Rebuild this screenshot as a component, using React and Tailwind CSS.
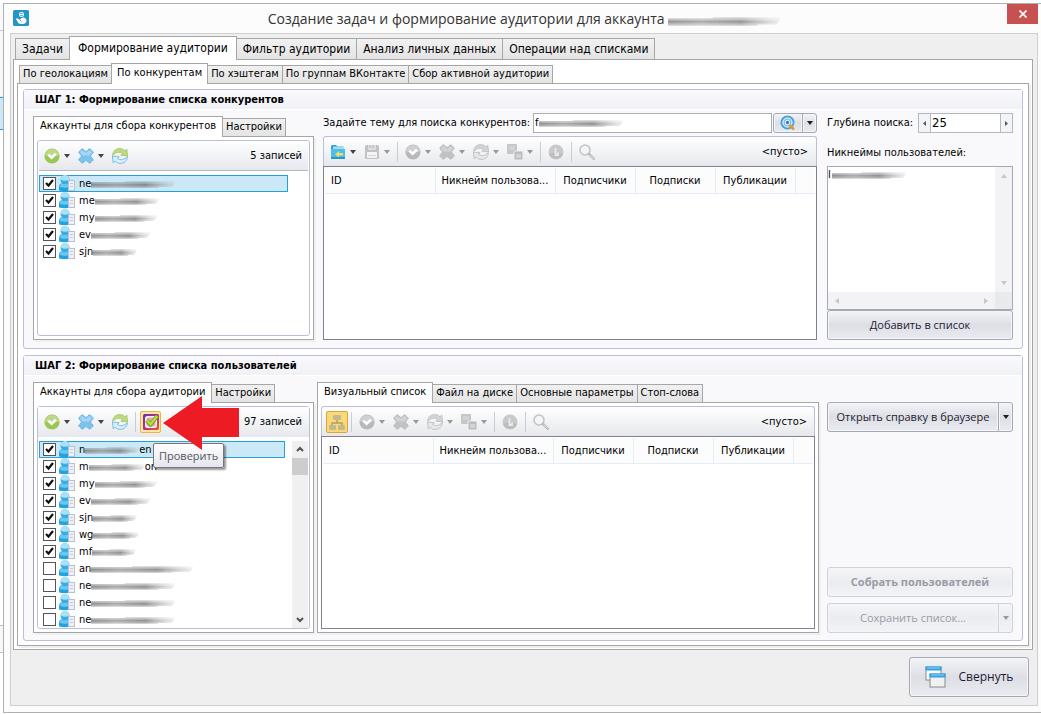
import React, { useId, useState } from 'react';
import clsx from 'clsx';

/* ---------- icons ---------- */

const Caret = ({ className = 'text-[#444]' }) => (
  <svg className={clsx('w-[6px] h-[4px] shrink-0', className)} viewBox="0 0 6 4" fill="currentColor">
    <path d="M0 0h6L3 4z" />
  </svg>
);

function CheckIcon({ off }) {
  return (
    <svg className="w-4 h-4" viewBox="0 0 16 16">
      <circle cx="8" cy="8" r="7.6" fill={off ? '#b9b9b9' : '#9cc653'} />
      <path d="M.6 7a7.6 7.6 0 0 1 14.8 0Q8 10 .6 7z" fill={off ? '#cfcfcf' : '#bcd98b'} />
      <path d="M4.400 6.600 7.600 9.800 11.800 5.800" fill="none" stroke="#fff" strokeWidth="2.600" />
    </svg>
  );
}

function CrossIcon({ off }) {
  return (
    <svg className="w-4 h-4" viewBox="0 0 16 16">
      <path
        d="M4.200.5 8 3.500 11.800.5 15.500 4.200 12.500 8l3 3.800-3.700 3.700L8 12.500l-3.800 3L.5 11.800 3.500 8 .5 4.200z"
        fill={off ? '#c2c2c2' : '#7cc3ec'}
        stroke={off ? '#b5b5b5' : '#5fabdf'}
        strokeWidth="1"
        strokeDasharray="1.500 1"
      />
      <path d="M4.200 2 8 5 11.800 2 14 4.200 11.500 7.500h-7L2 4.200z" fill={off ? '#d4d4d4' : '#a3d7f4'} />
    </svg>
  );
}

function RefreshIcon({ off }) {
  return (
    <svg className="w-4 h-4" viewBox="0 0 16 16">
      <path
        d="M.6 7.400C.8 3 4 .6 7.600.6c2.400 0 4 .8 5.200 2.200l2-1.600.8 6.800-6.800-.8 1.800-1.700C7.600 3.400 3.600 4 .6 7.400z"
        fill={off ? '#d4d4d4' : '#bedb80'}
        stroke={off ? '#b8b8b8' : '#98bf52'}
        strokeWidth=".7"
      />
      <path
        d="M15.400 8.600c-.2 4.400-3.400 6.800-7 6.800-2.400 0-4-.8-5.200-2.200l-2 1.600L.4 8l6.800.8-1.800 1.700c3 2.100 7 1.500 10-1.900z"
        fill={off ? '#e9e9e9' : '#d9effb'}
        stroke={off ? '#b8b8b8' : '#5fb2e0'}
        strokeWidth=".8"
      />
    </svg>
  );
}

const FolderIcon = () => (
  <svg className="w-4 h-4" viewBox="0 0 16 16">
    <path d="M1 2.500Q1 1 2.500 1H6l1.500 1.500H13V6H1z" fill="#2f9fd6" />
    <rect x="3" y="2.500" width="11" height="4" fill="#9fdcf6" />
    <path d="M1 5h14v9q0 1-1 1H2q-1 0-1-1z" fill="#52bdea" />
    <path d="M1 13h14v1q0 1-1 1H2q-1 0-1-1z" fill="#2b94cf" />
    <path d="M5 10.200 9 7v2h4v2.600H9v2z" fill="#e6e26a" />
  </svg>
);

const SaveIcon = () => (
  <svg className="w-4 h-4" viewBox="0 0 16 16">
    <rect x="1" y="1" width="14" height="14" rx="1.500" fill="#c2c2c2" />
    <rect x="4" y="1" width="8" height="5" fill="#dedede" />
    <path d="M6 1v3M9 1v3" stroke="#b0b0b0" />
    <rect x="3" y="8" width="10" height="6" fill="#f3f3f3" />
    <path d="M4 11.500h8" stroke="#d6d6d6" />
  </svg>
);

const CopyIcon = () => (
  <svg className="w-4 h-4" viewBox="0 0 16 16">
    <rect x="0" y="0" width="10" height="10" rx="1" fill="#c6c6c6" />
    <path d="M2 3h6M2 5h6" stroke="#e0e0e0" />
    <rect x="7" y="7" width="9" height="9" rx="1" fill="#bcbcbc" stroke="#eef0f3" />
    <rect x="9" y="10" width="5" height="4" fill="#d4d4d4" />
  </svg>
);

const InfoIcon = () => (
  <svg className="w-4 h-4" viewBox="0 0 16 16">
    <circle cx="8" cy="8" r="7.500" fill="#c9c9c9" />
    <path d="M1 10a7.500 7.500 0 0 0 14 0Q8 7 1 10z" fill="#bcbcbc" />
    <path d="M7.500 4v7.200h2.500V8.500" fill="none" stroke="#ececec" strokeWidth="1.800" />
  </svg>
);

const LensIcon = () => (
  <svg className="w-4 h-4" viewBox="0 0 16 16" fill="none">
    <circle cx="6" cy="6" r="5" fill="#f4f5f7" stroke="#c2c2c2" strokeWidth="1.500" />
    <path d="m10 10 4.700 4.700" stroke="#bdbdbd" strokeWidth="2.600" strokeLinecap="round" />
    <path d="m11 11 3.400 3.400" stroke="#e2e2e2" />
  </svg>
);

const TargetIcon = () => (
  <svg className="w-4 h-4" viewBox="0 0 16 16" fill="none">
    <circle cx="7.500" cy="7.500" r="7" fill="#4a9fd8" />
    <circle cx="7.500" cy="7.500" r="4.600" fill="#7fc0e8" stroke="#fff" />
    <circle cx="7.500" cy="7.500" r="2.200" fill="#2d7fbf" stroke="#fff" />
    <path d="m9.500 10 4.500 4.500" stroke="#e39a2b" strokeWidth="2.600" />
  </svg>
);

const TreeIcon = () => (
  <svg className="w-4 h-4" viewBox="0 0 16 16">
    <path d="M8 6v3M3 12V9h10v3" fill="none" stroke="#b09f6b" strokeWidth="1.500" />
    <rect x="4" y="1" width="8" height="5" rx="1" fill="#c3b98f" />
    <rect x="0" y="11" width="7" height="5" rx="1" fill="#c3b98f" />
    <rect x="9" y="11" width="7" height="5" rx="1" fill="#c3b98f" />
  </svg>
);

const InstaCheckIcon = () => (
  <svg className="w-4 h-4" viewBox="0 0 16 16">
    <defs>
      <linearGradient id="insta" x1="0" y1="0" x2="1" y2="1">
        <stop offset="0" stopColor="#5b35b5" />
        <stop offset=".5" stopColor="#c02a83" />
        <stop offset="1" stopColor="#ee5a2e" />
      </linearGradient>
    </defs>
    <rect x="0" y="0" width="16" height="16" rx="1.500" fill="url(#insta)" />
    <rect x="2" y="2" width="12" height="12" rx="2.500" fill="#fff6f2" />
    <rect x="3.500" y="3.500" width="9" height="9" rx="2" fill="#e9a3b4" />
    <path d="M3.600 6.500 7.500 10.500 14.300 2" fill="none" stroke="#6fa51c" strokeWidth="4" />
    <path d="M4 6.500 7.500 10.200 14.100 2" fill="none" stroke="#b2df4a" strokeWidth="2.400" />
  </svg>
);

const UserIcon = () => (
  <svg className="w-4 h-[17px] shrink-0" viewBox="0 0 16 17">
    <path d="M0 15.500V12Q0 8.500 3.500 8h5Q12 8.500 12 12v3.500q-6 1.600-12 0z" fill="#22a3e0" />
    <path d="M.8 12Q1 9 3.500 8.600h5Q11 9 11 12q-5 1.500-10.200 0z" fill="#6cc8f2" />
    <circle cx="6" cy="4.700" r="4.500" fill="#35aee6" />
    <path d="M1.600 4.500a4.400 4.400 0 0 1 8.800 0Q6 7 1.600 4.500z" fill="#a9e1f8" />
    <rect x="9.500" y="5.500" width="6" height="10" fill="#eef0f7" stroke="#bcc1d2" />
    <path d="M11 8.500h3M11 11.500h3" stroke="#c6cad9" />
  </svg>
);

const LogoIcon = () => (
  <svg className="w-4 h-4 shrink-0" viewBox="0 0 16 16">
    <rect width="16" height="16" rx="1.500" fill="#2595c6" />
    <rect x="6" y="2" width="5" height="5" rx="2" fill="#e9f6fc" />
    <path d="M7 3.500h3M7 5.500h3" stroke="#2595c6" strokeWidth=".7" />
    <path d="M2.500 8.500h2.500l1.500 1.500Q8 7.500 10.500 7.500 13.500 8 13.500 11 13 14 9.500 14H8Q5 14 4.300 11z" fill="#fff" />
    <path d="m7 10 1.500 1.500" stroke="#2595c6" strokeWidth=".8" />
  </svg>
);

const WindowsIcon = () => (
  <svg className="w-[22px] h-[22px]" viewBox="0 0 22 22">
    <rect x="1" y="1" width="15" height="13" fill="#fff" stroke="#8a8a8a" />
    <rect x=".5" y=".5" width="16" height="4" fill="#2ea3e3" />
    <path d="M2 2h13" stroke="#8fd3f7" />
    <rect x="5" y="8" width="15" height="13" fill="#f1f1f1" stroke="#8a8a8a" />
    <rect x="4.500" y="7.500" width="16" height="4" fill="#2ea3e3" />
    <path d="M6 9h13" stroke="#8fd3f7" />
  </svg>
);

/* ---------- small pieces ---------- */

// Grey brush stroke that hides the rest of a nickname
function Smudge({ width, height = 9, className }) {
  const id = useId();
  return (
    <svg
      className={clsx('shrink-0', className)}
      width={width}
      height={height}
      viewBox={`0 0 ${width} 9`}
      preserveAspectRatio="none"
      aria-hidden="true"
    >
      <defs>
        <linearGradient id={id} gradientUnits="userSpaceOnUse" x1="0" x2={width} y1="0" y2="0">
          <stop offset="0" stopColor="#777" stopOpacity=".8" />
          <stop offset=".3" stopColor="#888" stopOpacity=".7" />
          <stop offset=".65" stopColor="#666" stopOpacity=".7" />
          <stop offset="1" stopColor="#999" stopOpacity=".15" />
        </linearGradient>
      </defs>
      <g fill={`url(#${id})`}>
        <rect x={width * 0.4} y="1" width={width * 0.6} height="1" opacity=".35" />
        <rect x="0" y="2" width={width} height="1" opacity=".6" />
        <rect x="0" y="3" width={width - 1} height="1" opacity=".75" />
        <rect x="0" y="4" width={width - 1} height="1" />
        <rect x="0" y="5" width={width - 2} height="1" opacity=".9" />
        <rect x="0" y="6" width={width - 3} height="1" opacity=".75" />
        <rect x="0" y="7" width={width * 0.8} height="1" opacity=".45" />
      </g>
    </svg>
  );
}

const Sep = () => <div className="w-px h-5 -mx-px bg-[#c9ccd3] shrink-0" />;

function Tool({ icon, label, caret, off }) {
  return (
    <button type="button" aria-label={label} disabled={off} className="flex items-center gap-1 shrink-0">
      {icon}
      {caret && <Caret className={off ? 'text-[#999]' : 'text-[#444]'} />}
    </button>
  );
}

const Toolbar = ({ children, className }) => (
  <div
    className={clsx(
      'flex items-center gap-2 h-[30px] bg-gradient-to-b from-white to-[#e6e8ed] shrink-0 whitespace-nowrap',
      className
    )}
  >
    {children}
  </div>
);

function TableTools() {
  return (
    <>
      <Tool icon={<CheckIcon off />} label="Отметить" caret off />
      <Tool icon={<CrossIcon off />} label="Удалить" caret off />
      <Tool icon={<RefreshIcon off />} label="Обновить" caret off />
      <Tool icon={<CopyIcon />} label="Копировать" caret off />
      <Sep />
      <Tool icon={<InfoIcon />} label="Информация" off />
      <Sep />
      <Tool icon={<LensIcon />} label="Поиск" off />
      <span className="ml-auto pt-px">&lt;пусто&gt;</span>
    </>
  );
}

const tabSizes = {
  lg: { list: 'h-[23px] text-xs', tab: 'h-[21px] px-[6px]', active: 'h-[24px] px-2 pb-[2px]' },
  md: { list: 'h-5 text-[11px]', tab: 'h-[18px] px-[3px]', active: 'h-[21px] px-[5px] pb-[2px]' },
  sm: { list: 'h-5 text-[11px]', tab: 'h-[18px] px-[3px]', active: 'h-[21px] px-[6px] pb-[2px]' },
};

function Tabs({ items, initial = 0, size = 'sm', className }) {
  const [active, setActive] = useState(initial);
  const s = tabSizes[size];
  return (
    <div role="tablist" className={clsx('flex items-end shrink-0', s.list, className)}>
      {items.map((item, i) => (
        <button
          key={item}
          type="button"
          role="tab"
          aria-selected={i === active}
          onClick={() => setActive(i)}
          className={clsx(
            'border border-b-0 border-[#a6a6a6] whitespace-nowrap flex items-center justify-center',
            i !== 0 && '-ml-px',
            i === active
              ? ['bg-white relative z-10 -mb-px', s.active]
              : ['bg-gradient-to-b from-[#f1f1f1] to-[#e4e4e4]', s.tab]
          )}
        >
          {item}
        </button>
      ))}
    </div>
  );
}

const Group = ({ title, children, className }) => (
  <section className={clsx('border border-[#b9bfdb] rounded-[3px] bg-[#f9f9fc] flex flex-col', className)}>
    <h2 className="h-5 shrink-0 pl-[11px] font-bold leading-5 border-b border-white bg-gradient-to-b from-[#fafafd] to-[#f0f1f6]">
      {title}
    </h2>
    {children}
  </section>
);

const buttonLook =
  'border border-[#a5a8b5] bg-gradient-to-b from-[#f3f4f7] via-[#dddfe5] to-[#e9ebf0] text-[#1e1a33] shadow-[inset_0_0_0_1px_#f4f5f8] disabled:border-[#cfd1d8] disabled:text-[#9a9ba5] disabled:from-[#f6f6f9] disabled:via-[#ebecf0] disabled:to-[#f2f3f6]';

const Button = ({ children, className, ...props }) => (
  <button type="button" className={clsx("font-['Open_Sans',sans-serif] text-[11px]", buttonLook, className)} {...props}>
    {children}
  </button>
);

const SplitButton = ({ children, disabled }) => (
  <div className="flex h-[30px]">
    <Button disabled={disabled} className="grow rounded-l-[3px]">{children}</Button>
    <Button disabled={disabled} aria-label="Ещё" className="w-[15px] -ml-px rounded-r-[3px] flex items-center justify-center">
      <Caret className={disabled ? 'text-[#999]' : 'text-[#1e1a33]'} />
    </Button>
  </div>
);

function Accounts({ rows }) {
  return (
    <ul className="grow">
      {rows.map(([name, width, checked, tail], i) => (
        <li
          key={i}
          className={clsx(
            'h-[17px] border',
            i === 0 ? 'bg-[#cbe8f6] border-[#26a0da]' : 'border-transparent'
          )}
        >
          <label className="flex items-center h-[15px] pl-[3px]">
            <span className="grid shrink-0 mr-[3px]">
              <input
                type="checkbox"
                defaultChecked={checked}
                className="peer appearance-none w-[13px] h-[13px] border border-[#555] bg-white [grid-area:1/1]"
              />
              <svg className="w-[13px] h-[13px] hidden peer-checked:block pointer-events-none [grid-area:1/1]" viewBox="0 0 13 13">
                <path d="M3 6 5.500 8.500 10 3" fill="none" stroke="#111" strokeWidth="2.200" />
              </svg>
            </span>
            <UserIcon />
            <span className="ml-1 pt-[2px]">{name}</span>
            <Smudge width={width} className="mt-[2px]" />
            {tail && <span className="pt-[2px]">{tail}</span>}
          </label>
        </li>
      ))}
    </ul>
  );
}

const columns = ['ID', 'Никнейм пользова...', 'Подписчики', 'Подписки', 'Публикации', ''];

function UsersTable() {
  return (
    <div className="grow border border-[#7e828f] bg-white p-px">
      <table className="w-full table-fixed border-collapse">
        <colgroup>
          <col className="w-[110px]" />
          <col className="w-[120px]" />
          <col className="w-[80px]" />
          <col className="w-[80px]" />
          <col className="w-[80px]" />
          <col />
        </colgroup>
        <thead>
          <tr className="h-[25px] bg-[#fcfcfd]">
            {columns.map((c, i) => (
              <th
                key={i}
                scope="col"
                className={clsx(
                  'font-normal whitespace-nowrap border-b border-[#e3eefa] p-0 pt-px',
                  i < 5 && 'border-r',
                  i === 0 && 'text-left pl-[6px]'
                )}
              >
                {c}
              </th>
            ))}
          </tr>
        </thead>
      </table>
    </div>
  );
}

/* ---------- data ---------- */

const competitors = [
  ['ne', 84, true],
  ['me', 64, true],
  ['my', 62, true],
  ['ev', 59, true],
  ['sjn', 44, true],
];

const audience = [
  ['n', 54, true, 'en'],
  ['m', 56, true, 'on'],
  ['my', 62, true],
  ['ev', 59, true],
  ['sjn', 44, true],
  ['wg', 46, true],
  ['mf', 44, true],
  ['an', 102, false],
  ['ne', 84, false],
  ['ne', 84, false],
  ['ne', 84, false],
];

/* ---------- panels ---------- */

const pageBox = 'border border-[#a6a6a6] bg-white shadow-[2px_2px_0_#f0f0f0]';

function StepOne() {
  return (
    <Group title="ШАГ 1: Формирование списка конкурентов" className="h-[260px]">
      <div className="grow flex px-[9px] pb-2 pt-[3px]">
        <div className="w-[281px] shrink-0 flex flex-col pt-[3px]">
          <Tabs items={['Аккаунты для сбора конкурентов', 'Настройки']} />
          <div className={clsx('grow p-[3px] flex', pageBox)}>
            <div className="grow border border-[#b9bfdb] rounded-[3px] flex flex-col">
              <Toolbar className="border-b border-[#b5b8c0] mx-px pl-[5px] pr-[6px]">
                <Tool icon={<CheckIcon />} label="Отметить" caret />
                <Tool icon={<CrossIcon />} label="Удалить" caret />
                <Tool icon={<RefreshIcon />} label="Обновить" />
                <span className="ml-auto pt-[2px]">5 записей</span>
              </Toolbar>
              <div className="pt-1 pl-px pr-[21px]">
                <Accounts rows={competitors} />
              </div>
            </div>
          </div>
        </div>

        <div className="grow min-w-0 ml-[9px] flex flex-col">
          <div className="flex items-center h-5 mb-[3px]">
            <label htmlFor="topic" className="w-[210px] shrink-0 whitespace-nowrap pt-px">
              Задайте тему для поиска конкурентов:
            </label>
            <div className="grow h-full flex items-center border border-[#abadb3] bg-white pl-px">
              <input id="topic" defaultValue="f" className="w-1 outline-none" />
              <Smudge width={84} />
            </div>
            <div className="flex h-full ml-px shrink-0">
              <Button aria-label="Найти" className="w-[30px] rounded-l-[3px] flex items-center justify-center"><TargetIcon /></Button>
              <Button aria-label="Варианты" className="w-[15px] -ml-px rounded-r-[3px] flex items-center justify-center">
                <Caret className="text-[#1e1a33]" />
              </Button>
            </div>
          </div>
          <Toolbar className="border border-b-0 border-[#b9bfdb] rounded-t-[3px] pl-[6px] pr-2">
            <Tool icon={<FolderIcon />} label="Открыть" caret />
            <Tool icon={<SaveIcon />} label="Сохранить" caret off />
            <Sep />
            <TableTools />
          </Toolbar>
          <UsersTable />
        </div>

        <div className="w-[186px] ml-[10px] shrink-0 flex flex-col">
          <div className="flex items-center h-5">
            <label htmlFor="depth" className="grow whitespace-nowrap pt-px">Глубина поиска:</label>
            <div className="flex h-full w-[95px] border border-[#b5b8c0] bg-white">
              <button type="button" aria-label="Меньше" className="w-3 shrink-0 border-r border-[#b5b8c0] bg-[#f3f4f7] flex items-center justify-center">
                <svg className="w-[3px] h-[5px]" viewBox="0 0 3 5"><path d="M3 0v5L0 2.500z" fill="#555" /></svg>
              </button>
              <input id="depth" defaultValue="25" className="grow min-w-0 text-[13px] pl-px outline-none" />
              <button type="button" aria-label="Больше" className="w-3 shrink-0 border-l border-[#b5b8c0] bg-[#f3f4f7] flex items-center justify-center">
                <svg className="w-[3px] h-[5px]" viewBox="0 0 3 5"><path d="M0 0v5l3-2.500z" fill="#555" /></svg>
              </button>
            </div>
          </div>
          <label htmlFor="nicks" className="h-[33px] pt-3">Никнеймы пользователей:</label>
          <div className="grow border border-[#a5a8b5] bg-white grid grid-cols-[1fr_17px] grid-rows-[1fr_17px]">
            <div className="flex items-start">
              <textarea id="nicks" defaultValue="l" className="w-1 h-full resize-none outline-none overflow-hidden leading-4" />
              <Smudge width={74} className="mt-1" />
            </div>
            <div className="bg-[#f3f3f6] flex flex-col items-center justify-between py-[7px]">
              <Caret className="rotate-180 text-[#c5c5ca]" />
              <Caret className="text-[#c5c5ca]" />
            </div>
            <div className="bg-[#f3f3f6] flex items-center justify-between px-[6px]">
              <Caret className="rotate-90 text-[#c5c5ca]" />
              <Caret className="-rotate-90 text-[#c5c5ca]" />
            </div>
            <div className="bg-[#e9eaed]" />
          </div>
          <Button className="h-[30px] rounded-[3px]">Добавить в список</Button>
        </div>
      </div>
    </Group>
  );
}

function StepTwo() {
  return (
    <Group title="ШАГ 2: Формирование списка пользователей" className="h-[286px]">
      <div className="grow flex px-[9px] pb-[7px] pt-[6px]">
        <div className="w-[281px] shrink-0 flex flex-col">
          <Tabs items={['Аккаунты для сбора аудитории', 'Настройки']} />
          <div className={clsx('grow p-[3px] flex', pageBox)}>
            <div className="grow border border-[#b9bfdb] rounded-[3px] flex flex-col">
              <Toolbar className="pl-[6px] pr-[7px]">
                <Tool icon={<CheckIcon />} label="Отметить" caret />
                <Tool icon={<CrossIcon />} label="Удалить" caret />
                <Tool icon={<RefreshIcon />} label="Обновить" />
                <Sep />
                <div className="relative -ml-[3px]">
                  <button type="button" aria-label="Проверить" className="w-[21px] h-[22px] rounded-[2px] border border-[#e8b93a] bg-[#fbe9a8] flex items-center justify-center">
                    <InstaCheckIcon />
                  </button>
                  <svg className="absolute left-[23px] -top-[15px] w-[77px] h-[55px] z-40" viewBox="0 0 77 55">
                    <path d="M0 27 39 0V12H76V41H39V54z" fill="#ed1c24" />
                  </svg>
                  <div role="tooltip" className="absolute left-[13px] top-8 z-30 h-[25px] px-[5px] border border-[#767676] rounded-[2px] bg-gradient-to-b from-white to-[#e4e5f0] text-[#575757] font-['Open_Sans',sans-serif] text-[11px] leading-[23px] shadow-[2px_2px_2px_rgba(0,0,0,0.4)]">
                    Проверить
                  </div>
                </div>
                <span className="ml-auto pt-px">97 записей</span>
              </Toolbar>
              <div className="grow flex pt-1 pl-px">
                <Accounts rows={audience} />
                <div className="w-4 ml-[7px] mr-px bg-[#f0f0f0] flex flex-col items-center justify-between pb-1">
                  <div className="flex flex-col items-center w-full">
                    <svg className="w-2 h-[17px]" viewBox="0 0 8 17"><path d="m1 10 3-3 3 3" fill="none" stroke="#505050" strokeWidth="2" /></svg>
                    <div className="w-full h-[17px] bg-[#cdcdcd]" />
                  </div>
                  <svg className="w-2 h-2" viewBox="0 0 8 8"><path d="m1 2 3 3 3-3" fill="none" stroke="#505050" strokeWidth="2" /></svg>
                </div>
              </div>
            </div>
          </div>
        </div>

        <div className="grow min-w-0 ml-[3px] flex flex-col">
          <Tabs items={['Визуальный список', 'Файл на диске', 'Основные параметры', 'Стоп-слова']} />
          <div className={clsx('grow p-[3px] flex flex-col', pageBox)}>
            <Toolbar className="border border-b-0 border-[#b9bfdb] rounded-t-[3px] pl-1 pr-[7px]">
              <div className="flex items-center gap-1">
                <button type="button" aria-label="Дерево" className="w-[22px] h-[22px] rounded-[2px] border border-[#d9a834] bg-[#fbd977] flex items-center justify-center">
                  <TreeIcon />
                </button>
                <Sep />
              </div>
              <TableTools />
            </Toolbar>
            <UsersTable />
          </div>
        </div>

        <div className="w-[186px] ml-2 shrink-0 flex flex-col pt-5">
          <SplitButton>Открыть справку в браузере</SplitButton>
          <div className="mt-auto flex flex-col gap-[6px]">
            <Button disabled className="h-[30px] rounded-[3px] font-bold">Собрать пользователей</Button>
            <SplitButton disabled>Сохранить список...</SplitButton>
          </div>
        </div>
      </div>
    </Group>
  );
}

export default function App() {
  return (
    <div className="flex bg-white text-black text-[11px] font-['DejaVu_Sans_Condensed','DejaVu_Sans',sans-serif] pt-[3px]">
      {/* edge of the window underneath */}
      <div className="w-[3px] shrink-0 flex flex-col">
        <div className="h-7 border-b border-[#c3c6dd] bg-[#fafafd]" />
        <div className="h-[66px] border-b border-[#e3eefa] bg-[#f6f7fa]" />
        <div className="h-[33px] border-y border-[#26a0da] bg-[#cbe8f6]" />
        <div className="h-[496px] border-b border-[#b9bfdb]" />
        <div className="h-[27px] border-b border-[#b9bfdb] bg-[#f7f7fa]" />
      </div>

      <div className="grow min-w-0 border-l border-y border-[#b0b0b0] bg-[#fcfcfc] pl-[6px] pr-[3px] pb-[6px]">
        <header className="h-[29px] flex items-start">
          <div className="pt-[6px] pl-[3px]"><LogoIcon /></div>
          <h1 className="grow flex items-center justify-center h-[30px] pl-3 font-['Open_Sans',sans-serif] text-sm text-[#333] whitespace-nowrap">
            Создание задач и формирование аудитории для аккаунта&nbsp;
            <Smudge width={112} height={11} className="mt-1" />
          </h1>
          <button type="button" aria-label="Закрыть" className="w-[31px] h-5 bg-[#c75050] flex items-center justify-center">
            <svg className="w-2 h-2" viewBox="0 0 8 8"><path d="m.5.5 7 7m0-7-7 7" stroke="#fff" strokeWidth="1.700" /></svg>
          </button>
        </header>

        <div className="border border-[#cfcfcf] bg-[#efefef] px-[2px] pt-[2px] pb-2">
          <Tabs
            size="lg"
            className="pl-[2px]"
            initial={1}
            items={['Задачи', 'Формирование аудитории', 'Фильтр аудитории', 'Анализ личных данных', 'Операции над списками']}
          />
          <div className={clsx('p-[3px] mr-[2px]', pageBox)}>
            <Tabs
              size="md"
              className="pl-[2px]"
              initial={1}
              items={['По геолокациям', 'По конкурентам', 'По хэштегам', 'По группам ВКонтакте', 'Сбор активной аудитории']}
            />
            <div className={clsx('pl-[5px] pr-[5px] pt-[5px] pb-1 flex flex-col gap-[6px]', pageBox)}>
              <StepOne />
              <StepTwo />
            </div>
          </div>
          <div className="flex justify-end pt-[7px] pr-[6px]">
            <button type="button" className={clsx("w-[120px] h-10 rounded-[3px] flex items-center justify-center gap-3 font-['Open_Sans',sans-serif] text-xs", buttonLook)}>
              <WindowsIcon />
              Свернуть
            </button>
          </div>
        </div>
      </div>
    </div>
  );
}
